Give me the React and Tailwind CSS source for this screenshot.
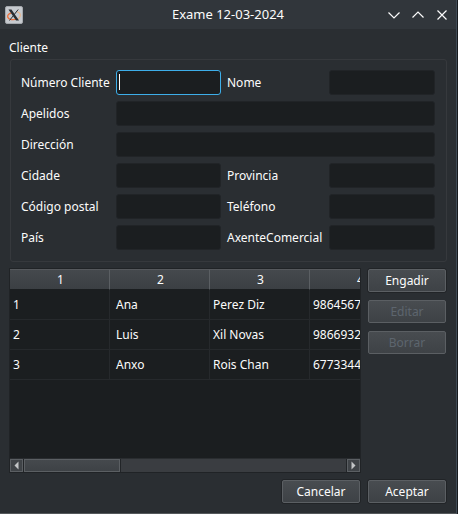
import React from "react";

const rows = [
  ["1", "Ana", "Perez Diz", "9864567"],
  ["2", "Luis", "Xil Novas", "9866932"],
  ["3", "Anxo", "Rois Chan", "6773344"],
];

const fields = [
  { id: "numero", label: "Número Cliente", active: true },
  { id: "nome", label: "Nome" },
  { id: "apelidos", label: "Apelidos", wide: true },
  { id: "direccion", label: "Dirección", wide: true },
  { id: "cidade", label: "Cidade" },
  { id: "provincia", label: "Provincia" },
  { id: "postal", label: "Código postal" },
  { id: "telefono", label: "Teléfono" },
  { id: "pais", label: "País" },
  { id: "axente", label: "AxenteComercial" },
];

function Field({ id, label, wide, active }) {
  return (
    <>
      <label htmlFor={id} className="whitespace-nowrap">
        {label}
      </label>
      <div className={wide ? "relative col-span-3 h-[25px]" : "relative h-[25px]"}>
        <input
          id={id}
          type="text"
          className={
            active
              ? "block h-full w-full rounded-[3px] border border-[#3daee9] bg-[#1b1e20] px-1 outline-none"
              : "block h-full w-full rounded-[3px] border border-[#212427] bg-[#1b1e20] px-1 outline-none"
          }
        />
        {active && <span className="absolute top-1 left-[3px] h-4 w-px bg-white" />}
      </div>
    </>
  );
}

function Button({ children, disabled }) {
  return (
    <button
      type="button"
      disabled={disabled}
      className="h-[25px] w-20 shrink-0 rounded-[3px] border border-[#212427] text-[#fcfcfc] disabled:border-transparent disabled:text-[#5d656e]"
    >
      <span className="flex h-full items-center justify-center rounded-[2px] border border-[#5b5f63] bg-linear-to-b from-[#484c50] to-[#3e4246]">
        {children}
      </span>
    </button>
  );
}

function TitleButton({ label, d }) {
  return (
    <button type="button" aria-label={label} className="flex h-6 w-6 items-center justify-center">
      <svg width="14" height="14" viewBox="0 0 14 14" fill="none" stroke="#fcfcfc" strokeWidth="1.2">
        <path d={d} />
      </svg>
    </button>
  );
}

function ScrollArrow({ label, points }) {
  return (
    <button
      type="button"
      aria-label={label}
      className="flex h-[13px] w-[13px] shrink-0 items-center justify-center border border-[#5b5f63] bg-[#3f4347]"
    >
      <svg width="5" height="9" viewBox="0 0 5 9">
        <polygon points={points} fill="#c3c5c7" />
      </svg>
    </button>
  );
}

export default function App() {
  return (
    <div className="flex min-h-screen flex-col bg-[#171a1d] pr-px font-['Noto_Sans',sans-serif] text-xs leading-[18px] text-[#fcfcfc]">
      <div className="flex flex-1 flex-col border-r border-b border-r-[#3f4a55] border-b-[#54585b] bg-[#2a2e32]">
        <header className="grid h-[29px] grid-cols-[1fr_auto_1fr] items-center bg-[#31363b] px-[5px]">
          <svg width="18" height="18" viewBox="0 0 18 18" aria-hidden="true">
            <rect x="0.5" y="0.5" width="17" height="17" rx="1.5" fill="#c6cacf" stroke="#a4a8ad" />
            <path d="M6.5 7C3.6 7.6 2.2 9.2 2.8 11.2C3.6 13.8 8.5 14.2 12 13" fill="none" stroke="#ef7038" strokeWidth="1.3" />
            <path d="M12 5.8C14.8 6.4 16 8.2 15 10.5C14.4 12 13.4 12.6 12.5 13" fill="none" stroke="#e9b58b" strokeWidth="1.2" />
            <path d="M3.5 3.5H6.5L14 14.5H11Z" fill="#292c30" />
            <path d="M13.2 3.5L4.5 14.5" stroke="#292c30" strokeWidth="1" />
          </svg>
          <h1 className="pb-0.5 text-[13px]">Exame 12-03-2024</h1>
          <div className="-mr-[3px] flex justify-end">
            <TitleButton label="Minimizar" d="M1.5 4.5L7 10L12.5 4.5" />
            <TitleButton label="Maximizar" d="M1.5 9.5L7 4L12.5 9.5" />
            <TitleButton label="Pechar" d="M2.5 2.5L11.5 11.5M11.5 2.5L2.5 11.5" />
          </div>
        </header>

        <main className="flex flex-1 flex-col gap-1.5 p-[9px]">
          <fieldset>
            <legend className="mb-0.5 pt-px">Cliente</legend>
            <div className="ml-px grid grid-cols-[89px_105fr_96px_106fr] items-center gap-1.5 rounded-[3px] border border-[#36393d] pt-2.5 pr-[11px] pb-[11px] pl-2.5">
              {fields.map((f) => (
                <Field key={f.id} {...f} />
              ))}
            </div>
          </fieldset>

          <div className="flex flex-1 gap-1.5">
            <div className="flex min-w-0 flex-1 flex-col border border-[#202326] bg-[#1b1e20]">
              <div className="flex-1 overflow-hidden">
                <table className="w-[400px] table-fixed border-separate border-spacing-0">
                  <thead>
                    <tr className="h-[21px]">
                      {["1", "2", "3", "4"].map((n) => (
                        <th
                          key={n}
                          scope="col"
                          className="border-t border-r border-b border-t-[#56595d] border-r-[#5b5f63] border-b-[#1b1e20] bg-linear-to-b from-[#45494d] to-[#3b3f43] py-0 pr-0 pl-0.5 font-normal"
                        >
                          {n}
                        </th>
                      ))}
                    </tr>
                  </thead>
                  <tbody>
                    {rows.map((r) => (
                      <tr key={r[0]} className="h-[30px]">
                        {r.map((c, i) => (
                          <td
                            key={c}
                            className={
                              i === 1
                                ? "border-r border-b border-[#26292c] py-0 pr-0 pl-1.5"
                                : "border-r border-b border-[#26292c] py-0 pr-0 pl-[3px]"
                            }
                          >
                            {c}
                          </td>
                        ))}
                      </tr>
                    ))}
                  </tbody>
                </table>
              </div>
              <div className="flex gap-px border-t border-[#2a2d30] bg-[#222528]">
                <ScrollArrow label="Desprazar á esquerda" points="4.5,0.5 4.5,8.5 0.5,4.5" />
                <div className="flex flex-1 bg-[#3a3d41]">
                  <div className="h-[13px] w-[97px] border-r border-[#222528]">
                    <div className="h-full border border-[#5b5f63] bg-linear-to-b from-[#45494d] to-[#3e4246]" />
                  </div>
                </div>
                <ScrollArrow label="Desprazar á dereita" points="0.5,0.5 0.5,8.5 4.5,4.5" />
              </div>
            </div>
            <div className="flex flex-col gap-1.5">
              <Button>Engadir</Button>
              <Button disabled>Editar</Button>
              <Button disabled>Borrar</Button>
            </div>
          </div>

          <footer className="flex justify-end gap-1.5">
            <Button>Cancelar</Button>
            <Button>Aceptar</Button>
          </footer>
        </main>
      </div>
    </div>
  );
}
